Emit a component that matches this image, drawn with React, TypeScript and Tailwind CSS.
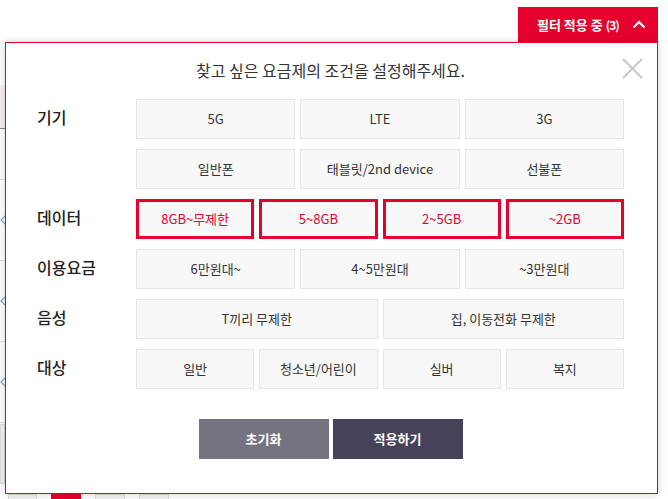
const RED = 'text-[#e6002d]'

type Opt = { label: string; on?: boolean }

const sections: { title: string; rows: { cols: string; items: Opt[] }[] }[] = [
  {
    title: '기기',
    rows: [
      { cols: 'grid-cols-3', items: [{ label: '5G' }, { label: 'LTE' }, { label: '3G' }] },
      { cols: 'grid-cols-3', items: [{ label: '일반폰' }, { label: '태블릿/2nd device' }, { label: '선불폰' }] },
    ],
  },
  {
    title: '데이터',
    rows: [
      {
        cols: 'grid-cols-4',
        items: [
          { label: '8GB~무제한', on: true },
          { label: '5~8GB', on: true },
          { label: '2~5GB', on: true },
          { label: '~2GB', on: true },
        ],
      },
    ],
  },
  {
    title: '이용요금',
    rows: [{ cols: 'grid-cols-3', items: [{ label: '6만원대~' }, { label: '4~5만원대' }, { label: '~3만원대' }] }],
  },
  {
    title: '음성',
    rows: [{ cols: 'grid-cols-2', items: [{ label: 'T끼리 무제한' }, { label: '집, 이동전화 무제한' }] }],
  },
  {
    title: '대상',
    rows: [
      { cols: 'grid-cols-4', items: [{ label: '일반' }, { label: '청소년/어린이' }, { label: '실버' }, { label: '복지' }] },
    ],
  },
]

const Option = ({ label, on }: Opt) => (
  <button
    className={
      on
        ? `h-10 border-[3px] border-[#e6002d] bg-[#f8f8f8] text-[13px] ${RED}`
        : 'h-10 border border-[#e6e6e6] bg-[#f8f8f8] text-[13px] text-[#333]'
    }
  >
    {label}
  </button>
)

const Chev = () => (
  <svg width="6" height="10" viewBox="0 0 6 10" fill="none">
    <path d="M5 1 1 5l4 4" stroke="#8aa4c4" strokeWidth="1.2" />
  </svg>
)

// the page under the overlay, only a sliver of it shows
const Background = () => (
  <div className="flex w-[40px] flex-col">
    <div className="h-[85px]" />
    <div className="h-[44px] border-b border-[#888] bg-[#f4f0f4]" />
    {[51, 81, 81, 81].map((h, i) => (
      <div key={i} style={{ height: h }} className="flex items-center border-b border-[#ddd]">
        {i > 0 && <Chev />}
      </div>
    ))}
    <div className="mt-[1px] h-[60px] w-[5px] border border-[#ddd] bg-[#f3f3f3]" />
  </div>
)

const Pagination = () => (
  <div className="flex gap-[14px] pl-[8px]">
    <div className="h-[30px] w-[29px] border border-[#ddd] bg-[#f4f4f4]" />
    <div className="h-[30px] w-[30px] bg-[#e6002d]" />
    <div className="h-[30px] w-[30px] border border-[#ddd] bg-[#f4f4f4]" />
    <div className="h-[30px] w-[30px] border border-[#ddd] bg-[#f4f4f4]" />
  </div>
)

export default function App() {
  return (
    <div
      className="relative h-[499px] w-[668px] overflow-hidden bg-white"
      style={{ fontFamily: '"Noto Sans CJK KR", "Noto Sans", sans-serif' }}
    >
      <Background />
      <div className="absolute left-0 top-[494px]">
        <Pagination />
      </div>

      {/* filter overlay */}
      <div className="absolute left-[5px] top-[7px] w-[653px]">
        <div className="flex justify-end">
          <div className="flex h-[35px] w-[140px] items-center justify-between bg-[#e6002d] pl-[19px] pr-[12px] text-[13px] font-bold text-white">
            <span>
              필터 적용 중 <span className="text-[12px] tracking-[-1px]">(3)</span>
            </span>
            <svg width="14" height="9" viewBox="0 0 14 9" fill="none">
              <path d="M1.5 7.5 7 2l5.5 5.5" stroke="white" strokeWidth="2.2" />
            </svg>
          </div>
        </div>
        <div className="relative h-[452px] border border-[#e6002d] bg-white pb-[34px] pl-[31px] pr-[33px] pt-[16px] shadow-[0_0_8px_rgba(0,0,0,0.18)]">
          <svg className="absolute right-[14px] top-[15px]" width="21" height="21" viewBox="0 0 21 21" fill="none">
            <path d="M1 1l19 19M20 1 1 20" stroke="#c6c6ca" strokeWidth="1.8" />
          </svg>
          <p className="text-center text-[16px] leading-[22px] text-[#333]">찾고 싶은 요금제의 조건을 설정해주세요.</p>

          <div className="mt-[18px] flex flex-col gap-[10px]">
            {sections.map((s) => (
              <div key={s.title} className="flex">
                <div className="flex h-10 w-[99px] shrink-0 items-center pb-[4px] text-[16px] font-medium text-[#222]">
                  {s.title}
                </div>
                <div className="flex flex-1 flex-col gap-[10px]">
                  {s.rows.map((r, i) => (
                    <div key={i} className={`grid ${r.cols} gap-[5px]`}>
                      {r.items.map((o) => (
                        <Option key={o.label} {...o} />
                      ))}
                    </div>
                  ))}
                </div>
              </div>
            ))}
          </div>

          <div className="mt-[30px] flex justify-center gap-[4px]">
            <button className="h-10 w-[130px] bg-[#75737f] text-[13px] font-bold text-white">초기화</button>
            <button className="h-10 w-[130px] bg-[#46425a] text-[13px] font-bold text-white">적용하기</button>
          </div>
        </div>
      </div>
    </div>
  )
}
